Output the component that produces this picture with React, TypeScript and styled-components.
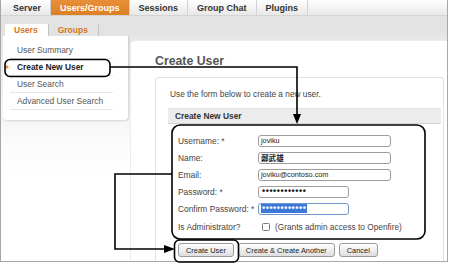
import React from "react";
import styled, { createGlobalStyle } from "styled-components";

const Global = createGlobalStyle`
  html, body { margin: 0; padding: 0; background: #fff; }
  body { font-family: "Liberation Sans", Arial, sans-serif; overflow: hidden; }
  * { box-sizing: border-box; }
`;

const Frame = styled.div`
  position: relative;
  width: 450px;
  height: 265px;
  overflow: hidden;
  background: #fff;
`;

const Window = styled.div`
  width: 448px;
  height: 262px;
  border-left: 1px solid #a8a8a8;
  border-right: 1px solid #a8a8a8;
  border-bottom: 1px solid #a8a8a8;
  display: flex;
  flex-direction: column;
  overflow: hidden;
`;

const TopNav = styled.div`
  height: 16px;
  flex: none;
  display: flex;
  padding-left: 3px;
  background: linear-gradient(#fefefe, #e8e8e8);
  border-bottom: 1px solid #d4d4d4;
`;

const NavTab = styled.div<{ $active?: boolean }>`
  padding: 0 9px;
  line-height: 16px;
  font-size: 9px;
  font-weight: bold;
  color: ${(p) => (p.$active ? "#fff" : "#333")};
  background: ${(p) => (p.$active ? "linear-gradient(#e78f38, #dc7f25)" : "transparent")};
  border-right: 1px solid #d2d2d2;
  white-space: nowrap;
`;

const SubNav = styled.div`
  height: 20px;
  flex: none;
  display: flex;
  align-items: flex-end;
  padding-left: 4px;
  background: #e3e3e3;
`;

const SubTab = styled.div<{ $active?: boolean }>`
  height: 12px;
  display: flex;
  align-items: center;
  padding: 0 10px 0 9px;
  font-size: 8.5px;
  font-weight: bold;
  color: #d6761a;
  background: ${(p) => (p.$active ? "#fff" : "transparent")};
  border-right: 1px solid #c4c4c4;
`;

const Body = styled.div`
  flex: 1;
  display: flex;
  background: linear-gradient(#e7e7e7 0px, #f3f3f3 70px, #fbfbfb 110px, #fff 140px);
`;

const SideCol = styled.div`
  width: 129px;
  flex: none;
  padding-left: 2px;
`;

const SideCard = styled.div`
  width: 125px;
  background: #fff;
  padding: 6px 0 10px;
  border-radius: 0 0 4px 4px;
  box-shadow: 1px 1px 2px rgba(0, 0, 0, 0.14);
`;

const SideItem = styled.div<{ $active?: boolean }>`
  height: 17px;
  margin: 0 15px 0 7px;
  display: flex;
  align-items: center;
  border-bottom: 1px solid #e6e6e6;
  font-size: 8.4px;
  font-weight: ${(p) => (p.$active ? "bold" : "normal")};
  color: ${(p) => (p.$active ? "#222" : "#555")};
  white-space: nowrap;
`;

const Marker = styled.span<{ $show?: boolean }>`
  width: 0;
  height: 0;
  margin-left: -4px;
  border-left: 3px solid #e08a2c;
  border-top: 2.5px solid transparent;
  border-bottom: 2.5px solid transparent;
  visibility: ${(p) => (p.$show ? "visible" : "hidden")};
`;

const SideLabel = styled.span`
  margin-left: 8px;
`;

const MainCol = styled.div`
  flex: 1;
  padding-top: 4px;
  display: flex;
`;

const MainPanel = styled.div`
  flex: 1;
  background: #fff;
  border-top-left-radius: 5px;
  border-left: 1px solid #ececec;
  border-top: 1px solid #ececec;
  padding-left: 24px;
  display: flex;
  flex-direction: column;
`;

const Heading = styled.h1`
  margin: 13px 0 8px;
  font-size: 12.3px;
  line-height: 15px;
  font-weight: bold;
  color: #555;
`;

const ContentBox = styled.div`
  flex: 1;
  margin-right: 3px;
  border: 1px solid #e2e2e2;
  border-bottom: none;
  border-radius: 4px 4px 0 0;
  padding: 11px 2px 0 12px;
`;

const Intro = styled.p`
  margin: 0 0 9px 2px;
  font-size: 8.3px;
  line-height: 10px;
  color: #444;
`;

const Bar = styled.div`
  height: 16px;
  display: flex;
  align-items: center;
  padding-left: 7px;
  background: #ececec;
  border-top: 1px solid #e2e2e2;
  border-bottom: 1px solid #d4d4d4;
  font-size: 8.4px;
  font-weight: bold;
  color: #333;
`;

const Form = styled.div`
  padding: 8px 0 0 10px;
  display: flex;
  flex-direction: column;
`;

const Row = styled.div<{ $h?: number }>`
  height: ${(p) => p.$h ?? 17}px;
  display: grid;
  grid-template-columns: 80px 1fr;
  align-items: center;
`;

const Label = styled.span`
  font-size: 8.4px;
  color: #444;
  white-space: nowrap;
`;

const Field = styled.div<{ $w: number; $focus?: boolean; $cjk?: boolean }>`
  width: ${(p) => p.$w}px;
  height: 12px;
  border: 1px solid ${(p) => (p.$focus ? "#6f95cf" : "#9c9c9c")};
  border-radius: 3px;
  background: #fff;
  padding-left: 2px;
  display: flex;
  align-items: center;
  font-size: ${(p) => (p.$cjk ? "7.6px" : "7.3px")};
  font-family: ${(p) =>
    p.$cjk ? '"Noto Sans CJK TC", "Noto Sans CJK SC", sans-serif' : '"Liberation Sans", Arial, sans-serif'};
  font-weight: ${(p) => (p.$cjk ? "bold" : "normal")};
  color: #222;
  overflow: hidden;
  white-space: nowrap;
`;

const Dots = styled.span<{ $selected?: boolean }>`
  font-family: "Liberation Sans", Arial, sans-serif;
  font-size: 9px;
  font-weight: bold;
  letter-spacing: 0.55px;
  line-height: 9px;
  padding: 0 1px;
  color: ${(p) => (p.$selected ? "#fff" : "#111")};
  background: ${(p) => (p.$selected ? "#3b78d8" : "transparent")};
`;

const CheckLine = styled.div`
  display: flex;
  align-items: center;
  gap: 5px;
  padding-left: 4px;
`;

const Box = styled.span`
  width: 8px;
  height: 8px;
  border: 1px solid #7a7a7a;
  border-radius: 1.5px;
  background: #fff;
`;

const Note = styled.span`
  font-size: 8.3px;
  color: #444;
  white-space: nowrap;
`;

const Buttons = styled.div`
  display: flex;
  gap: 4px;
  margin-top: 6px;
`;

const Button = styled.div`
  height: 14px;
  padding: 0 7px;
  display: flex;
  align-items: center;
  border: 1px solid #9a9a9a;
  border-radius: 3px;
  background: linear-gradient(#ffffff, #dedede);
  font-size: 7.4px;
  color: #222;
  white-space: nowrap;
`;

const Overlay = styled.svg`
  position: absolute;
  left: 0;
  top: 0;
  pointer-events: none;
`;

export default function App() {
  const dots = "\u2022".repeat(12);
  return (
    <Frame>
      <Global />
      <Window>
        <TopNav>
          <NavTab>Server</NavTab>
          <NavTab $active>Users/Groups</NavTab>
          <NavTab>Sessions</NavTab>
          <NavTab>Group Chat</NavTab>
          <NavTab>Plugins</NavTab>
        </TopNav>
        <SubNav>
          <SubTab $active>Users</SubTab>
          <SubTab>Groups</SubTab>
        </SubNav>
        <Body>
          <SideCol>
            <SideCard>
              <SideItem><Marker /><SideLabel>User Summary</SideLabel></SideItem>
              <SideItem $active><Marker $show /><SideLabel>Create New User</SideLabel></SideItem>
              <SideItem><Marker /><SideLabel>User Search</SideLabel></SideItem>
              <SideItem><Marker /><SideLabel>Advanced User Search</SideLabel></SideItem>
            </SideCard>
          </SideCol>
          <MainCol>
            <MainPanel>
              <Heading>Create User</Heading>
              <ContentBox>
                <Intro>Use the form below to create a new user.</Intro>
                <Bar>Create New User</Bar>
                <Form>
                  <Row>
                    <Label>Username: *</Label>
                    <Field $w={133}>joviku</Field>
                  </Row>
                  <Row>
                    <Label>Name:</Label>
                    <Field $w={133} $cjk>鄭武雄</Field>
                  </Row>
                  <Row>
                    <Label>Email:</Label>
                    <Field $w={133}>joviku@contoso.com</Field>
                  </Row>
                  <Row>
                    <Label>Password: *</Label>
                    <Field $w={91}><Dots>{dots}</Dots></Field>
                  </Row>
                  <Row>
                    <Label>Confirm Password: *</Label>
                    <Field $w={91} $focus><Dots $selected>{dots}</Dots></Field>
                  </Row>
                  <Row $h={20}>
                    <Label>Is Administrator?</Label>
                    <CheckLine>
                      <Box />
                      <Note>(Grants admin access to Openfire)</Note>
                    </CheckLine>
                  </Row>
                  <Buttons>
                    <Button>Create User</Button>
                    <Button>Create &amp; Create Another</Button>
                    <Button>Cancel</Button>
                  </Buttons>
                </Form>
              </ContentBox>
            </MainPanel>
          </MainCol>
        </Body>
      </Window>
      <Overlay width="450" height="265" viewBox="0 0 450 265">
        <g fill="none" stroke="#000" strokeWidth="1.6" strokeLinejoin="miter">
          <rect x="5" y="59.5" width="105" height="17" rx="5" />
          <path d="M110 67 H297 V116" />
          <rect x="172" y="125" width="253" height="114" rx="8" />
          <path d="M172 174 H115 V249 H165" />
          <rect x="174.5" y="240" width="64" height="22" rx="5" />
        </g>
        <g fill="#000">
          <polygon points="293,114 301,114 297,124" />
          <polygon points="164,245 164,253 175,249" />
        </g>
      </Overlay>
    </Frame>
  );
}
